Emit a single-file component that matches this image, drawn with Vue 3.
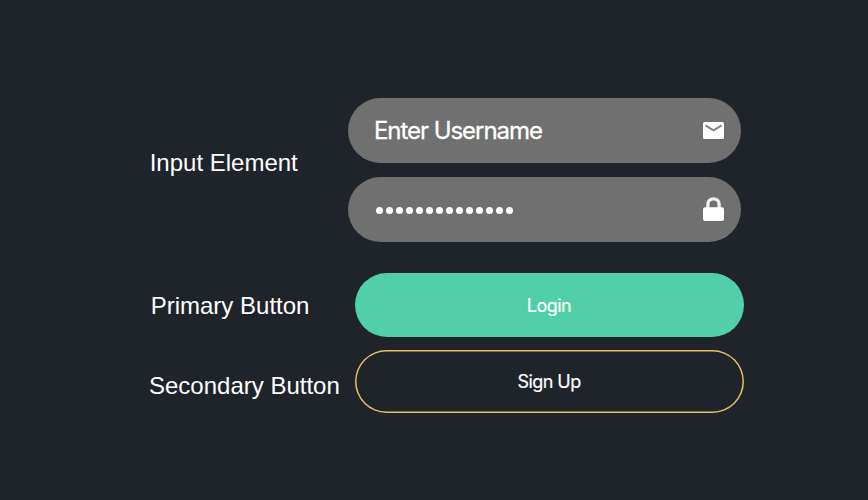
<script setup>
import { ref } from 'vue'

const username = ref('Enter Username')
const passwordLength = 14
</script>

<template>
  <main class="sheet">
    <section class="row inputs">
      <span class="label label-input">Input Element</span>
      <div class="fields">
        <div class="field">
          <span class="value">{{ username }}</span>
          <svg class="icon mail" viewBox="0 0 21 17" aria-hidden="true">
            <rect width="21" height="17" rx="1.5" fill="#fff" />
            <path d="M2.4 3.3 10.5 8.3 18.6 3.3" fill="none" stroke="#858585" stroke-width="2.1" />
          </svg>
        </div>
        <div class="field">
          <span class="dots"><i v-for="n in passwordLength" :key="n" class="dot" /></span>
          <svg class="icon lock" viewBox="0 0 21 25" aria-hidden="true">
            <path d="M4.9 12V7a5.6 5.2 0 0 1 11.2 0V12" fill="none" stroke="#f0f0f0" stroke-width="3.3" />
            <rect y="10.2" width="21" height="13.8" rx="2" fill="#fff" />
          </svg>
        </div>
      </div>
    </section>
    <section class="row primary-row">
      <span class="label label-primary">Primary Button</span>
      <button class="btn primary">Login</button>
    </section>
    <section class="row secondary-row">
      <span class="label label-secondary">Secondary Button</span>
      <button class="btn secondary">Sign Up</button>
    </section>
  </main>
</template>

<style>
body {
  margin: 0;
  background: #1f242b;
}
</style>

<style scoped>
.sheet {
  box-sizing: border-box;
  width: 868px;
  height: 500px;
  padding: 97.7px 0 0 149px;
  background: #1f242b;
  color: #fff;
  font-family: "Liberation Sans", Arial, sans-serif;
}
.row {
  display: flex;
}
.label {
  flex: none;
  box-sizing: border-box;
  font-size: 24px;
  line-height: 28px;
  white-space: nowrap;
}
.label-input {
  width: 198.7px;
  padding: 51px 0 0 0.7px;
}
.label-primary {
  width: 206px;
  padding: 18.7px 0 0 1.7px;
}
.label-secondary {
  width: 206px;
  padding-top: 22.5px;
}
.fields {
  display: flex;
  flex-direction: column;
  gap: 13.7px;
}
.field {
  box-sizing: border-box;
  display: flex;
  align-items: center;
  justify-content: space-between;
  width: 393.5px;
  height: 65.3px;
  padding: 0 17.2px 0 26.3px;
  border-radius: 33px;
  background: #707070;
}
.value {
  padding-top: 1.2px;
  font-family: Inter, "Liberation Sans", sans-serif;
  font-size: 24px;
  line-height: 30px;
  letter-spacing: -1.05px;
  white-space: nowrap;
  -webkit-text-stroke: 0.3px #fff;
}
.icon {
  display: block;
  width: 21px;
}
.mail {
  height: 17px;
}
.lock {
  height: 25px;
}
.dots {
  display: flex;
  gap: 3px;
  padding: 2px 0 0 2px;
}
.dot {
  width: 7px;
  height: 7px;
  border-radius: 50%;
  background: #fff;
}
.primary-row {
  margin-top: 31.4px;
}
.secondary-row {
  margin-top: 13.2px;
}
.btn {
  box-sizing: border-box;
  width: 389px;
  height: 63px;
  padding: 1px 1px 0 0;
  border: 0;
  border-radius: 32px;
  color: #fff;
  font: 18px/24px Inter, "Liberation Sans", sans-serif;
  letter-spacing: -0.55px;
  -webkit-text-stroke: 0.2px #fff;
}
.primary {
  height: 63.2px;
  padding-top: 2.2px;
  background: #50cfa8;
}
.secondary {
  margin-top: -0.2px;
  background: transparent;
  box-shadow: inset 0 0 0 1.5px #e3bf68;
}
</style>
